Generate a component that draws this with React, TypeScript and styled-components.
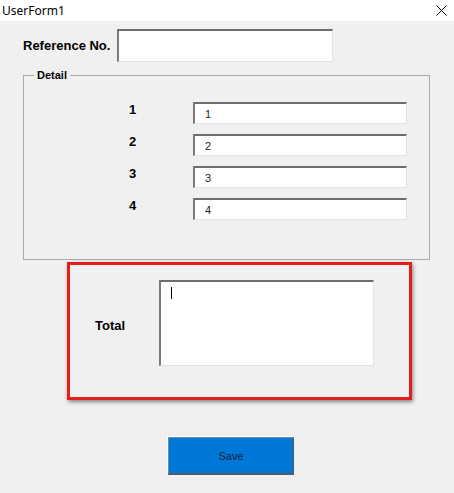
import React from 'react'
import styled, { createGlobalStyle } from 'styled-components'

const Global = createGlobalStyle`
  html, body {
    margin:0;
    padding:0;
    background:#f0f0f0;
  }
  body {
    font-family:"Liberation Sans", Arial, sans-serif;
    color:#000;
  }
`
const Window = styled.div`
  width:454px;
  height:493px;
  display:flex;
  flex-direction:column;
  background:#f0f0f0;
  overflow:hidden;
`
const TitleBar = styled.div`
  height:21px;
  background:#ffffff;
  display:flex;
  align-items:center;
  justify-content:space-between;
  padding:0 7px 0 2px;
`
const Title = styled.span`
  font-family:"Noto Sans", "Open Sans", sans-serif;
  font-size:12px;
  line-height:12px;
`
const Body = styled.div`
  display:flex;
  flex-direction:column;
  padding-left:23px;
`
const Row = styled.div`
  display:flex;
  align-items:center;
  gap:7px;
  margin-top:8px;
`
const Label = styled.span<{ $size?: number }>`
  font-weight:700;
  font-size:${p => p.$size || 13}px;
  line-height:16px;
`
const TextBox = styled.div<{ $w: number; $h: number }>`
  box-sizing:border-box;
  width:${p => p.$w}px;
  height:${p => p.$h}px;
  background:#ffffff;
  border-top:2px solid #6d6d6d;
  border-left:2px solid #7a7a7a;
  border-right:1px solid #e3e3e3;
  border-bottom:1px solid #e3e3e3;
  padding:4px 10px;
  font-size:11px;
  line-height:13px;
  color:#222;
`
const Frame = styled.div`
  position:relative;
  box-sizing:border-box;
  width:407px;
  height:185px;
  margin-top:13px;
  border:1px solid #a9a9a9;
  padding:26px 0 0 105px;
`
const Legend = styled.span`
  position:absolute;
  top:-8px;
  left:10px;
  padding:0 3px;
  background:#f0f0f0;
  font-weight:700;
  font-size:11px;
  line-height:14px;
`
const DetailGrid = styled.div`
  display:grid;
  grid-template-columns:64px 214px;
  row-gap:10px;
  align-items:start;
`
const NumLabel = styled(Label)`
  margin-top:0;
`
const Highlight = styled.div`
  box-sizing:border-box;
  width:345px;
  height:138px;
  margin:2px 0 0 44px;
  border:3px solid #e31c1c;
  box-shadow:1px 2px 4px rgba(0,0,0,0.45);
  display:flex;
  align-items:flex-start;
  padding:15px 0 0 25px;
`
const TotalLabel = styled(Label)`
  width:64px;
  margin-top:38px;
`
const Caret = styled.span`
  display:inline-block;
  width:1px;
  height:12px;
  margin-top:1px;
  background:#000;
`
const SaveButton = styled.button`
  box-sizing:border-box;
  width:126px;
  height:38px;
  margin:37px 0 0 145px;
  background:#0078d7;
  border:1px solid #6a8fb0;
  border-right-color:#4d5e6e;
  border-bottom:2px solid #4d5e6e;
  box-shadow:-1px -1px 0 #ffffff;
  font-family:"Liberation Sans", Arial, sans-serif;
  font-size:11px;
  color:#12223d;
  padding:0;
`

const CloseIcon = () => (
  <svg width="11" height="11" viewBox="0 0 11 11">
    <path d="M0.5 0.5 L10.5 10.5 M10.5 0.5 L0.5 10.5" stroke="#000" strokeWidth="1" />
  </svg>
)

const details = ['1', '2', '3', '4']

export default function App() {
  return (
    <Window>
      <Global />
      <TitleBar>
        <Title>UserForm1</Title>
        <CloseIcon />
      </TitleBar>
      <Body>
        <Row>
          <Label>Reference No.</Label>
          <TextBox $w={216} $h={33} />
        </Row>
        <Frame>
          <Legend>Detail</Legend>
          <DetailGrid>
            {details.map(d => (
              <React.Fragment key={d}>
                <NumLabel>{d}</NumLabel>
                <TextBox $w={214} $h={22}>{d}</TextBox>
              </React.Fragment>
            ))}
          </DetailGrid>
        </Frame>
        <Highlight>
          <TotalLabel>Total</TotalLabel>
          <TextBox $w={215} $h={86}>
            <Caret />
          </TextBox>
        </Highlight>
        <SaveButton>Save</SaveButton>
      </Body>
    </Window>
  )
}
